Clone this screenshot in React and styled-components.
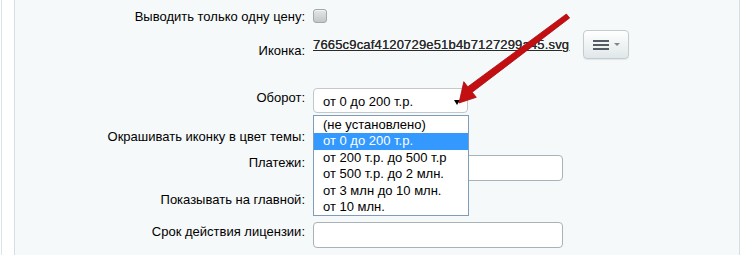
import styled, { createGlobalStyle } from 'styled-components';

const GlobalStyle = createGlobalStyle`
    html, body {
        margin: 0;
        padding: 0;
        background: #ffffff;
    }
    body {
        font-family: "Liberation Sans", Arial, sans-serif;
        font-size: 13px;
        color: #000000;
    }
`;

const options = [
    '(не установлено)',
    'от 0 до 200 т.р.',
    'от 200 т.р. до 500 т.р',
    'от 500 т.р. до 2 млн.',
    'от 3 млн до 10 млн.',
    'от 10 млн.',
];

export default function App () {
    return (
        <>
            <GlobalStyle />
            <Page>
                <Panel>
                    <Row $height={24} $align="center">
                        <Label>Выводить только одну цену:</Label>
                        <Control><Checkbox /></Control>
                    </Row>
                    <Row $height={58}>
                        <Label $top={15}>Иконка:</Label>
                        <Control $top={2}>
                            <FileLink href="#">7665c9caf4120729e51b4b7127299a45.svg</FileLink>
                            <MenuButton>
                                <Burger>
                                    <i /><i /><i />
                                </Burger>
                                <Caret />
                            </MenuButton>
                        </Control>
                    </Row>
                    <Row $height={36}>
                        <Label $top={4}>Оборот:</Label>
                        <Control $top={2}>
                            <SelectWrap>
                                <Select>
                                    от 0 до 200 т.р.
                                    <SelectArrow />
                                </Select>
                                <OptionList>
                                    {options.map((option, index) => (
                                        <Option key={index} $active={index === 1}>{option}</Option>
                                    ))}
                                </OptionList>
                            </SelectWrap>
                        </Control>
                    </Row>
                    <Row $height={28}>
                        <Label $top={7}>Окрашивать иконку в цвет темы:</Label>
                        <Control $top={7}><Checkbox /></Control>
                    </Row>
                    <Row $height={36}>
                        <Label $top={5}>Платежи:</Label>
                        <Control $top={5}><TextInput /></Control>
                    </Row>
                    <Row $height={28}>
                        <Label $top={6}>Показывать на главной:</Label>
                        <Control $top={7}><Checkbox /></Control>
                    </Row>
                    <Row $height={36}>
                        <Label $top={10}>Срок действия лицензии:</Label>
                        <Control $top={8}><TextInput /></Control>
                    </Row>
                </Panel>
                <Arrow viewBox="0 0 756 255" width="756" height="255">
                    <polygon
                        points="566.4,14 569.6,18 472.2,92.2 476.3,97.3 459,103 463.8,81.7 467.8,86.8"
                        fill="#c30f12"
                        stroke="#a80a0d"
                        strokeWidth="0.8"
                        strokeLinejoin="round"
                    />
                </Arrow>
            </Page>
        </>
    );
}

const Page = styled.div`
    position: relative;
    width: 756px;
    height: 255px;
    overflow: hidden;
    display: flex;
    background: #ffffff;
    &::before {
        content: '';
        width: 1px;
        margin-left: 1px;
        margin-right: 12px;
        background: #dde3e6;
    }
`;

const Panel = styled.div`
    width: 724px;
    padding-top: 4px;
    background: #f5f9f9;
    border-left: 1px solid #d5dfe3;
    border-right: 1px solid #d5dfe3;
`;

const Row = styled.div`
    display: flex;
    align-items: ${({ $align }) => $align || 'flex-start'};
    height: ${({ $height }) => $height}px;
`;

const Label = styled.div`
    width: 290px;
    flex-shrink: 0;
    padding-top: ${({ $top }) => $top || 0}px;
    margin-right: 8px;
    text-align: right;
    line-height: 15px;
    color: #000000;
`;

const Control = styled.div`
    display: flex;
    align-items: flex-start;
    padding-top: ${({ $top }) => $top || 0}px;
`;

const Checkbox = styled.span`
    display: block;
    width: 12px;
    height: 12px;
    border: 1px solid #a3a8ab;
    border-radius: 3px;
    background: linear-gradient(#e4e6e7, #c3c7c9);
    box-shadow: inset 0 1px 0 #f2f3f4;
`;

const FileLink = styled.a`
    display: block;
    margin-top: 7px;
    line-height: 15px;
    letter-spacing: 0.17px;
    color: #2b2b2b;
    text-decoration: underline;
    text-shadow: 0 0 0.3px #2b2b2b;
`;

const MenuButton = styled.div`
    width: 44px;
    height: 27px;
    margin-left: 14px;
    display: flex;
    align-items: center;
    justify-content: center;
    gap: 5px;
    border: 1px solid #c3ccd0;
    border-radius: 4px;
    background: linear-gradient(#ffffff, #e0e7e9);
    box-shadow: 0 1px 1px rgba(0, 0, 0, 0.08);
`;

const Burger = styled.span`
    display: flex;
    flex-direction: column;
    gap: 2px;
    i {
        display: block;
        width: 16px;
        height: 2px;
        background: #535c64;
    }
`;

const Caret = styled.span`
    width: 0;
    height: 0;
    border-left: 3.5px solid transparent;
    border-right: 3.5px solid transparent;
    border-top: 3px solid #7d878d;
`;

const SelectWrap = styled.div`
    position: relative;
`;

const Select = styled.div`
    position: relative;
    box-sizing: border-box;
    width: 155px;
    height: 25px;
    padding: 5px 0 0 9px;
    line-height: 15px;
    background: #ffffff;
    border: 1px solid #c2c8cb;
    border-radius: 4px;
`;

const SelectArrow = styled.span`
    position: absolute;
    right: 7px;
    top: 11px;
    width: 0;
    height: 0;
    border-left: 3.5px solid transparent;
    border-right: 3.5px solid transparent;
    border-top: 5px solid #000000;
`;

const OptionList = styled.div`
    position: absolute;
    left: 0;
    top: 27px;
    box-sizing: border-box;
    width: 156px;
    height: 101px;
    padding-top: 1px;
    background: #ffffff;
    border: 1px solid #7f9db9;
    z-index: 2;
`;

const Option = styled.div`
    height: 16.4px;
    line-height: 16px;
    padding-left: 9px;
    white-space: nowrap;
    color: ${({ $active }) => $active ? '#ffffff' : '#000000'};
    background: ${({ $active }) => $active ? '#3399ff' : 'transparent'};
`;

const TextInput = styled.div`
    box-sizing: border-box;
    width: 250px;
    height: 26px;
    background: #ffffff;
    border: 1px solid #a9b2b6;
    border-radius: 4px;
`;

const Arrow = styled.svg`
    position: absolute;
    left: 0;
    top: 0;
    pointer-events: none;
    z-index: 3;
`;
